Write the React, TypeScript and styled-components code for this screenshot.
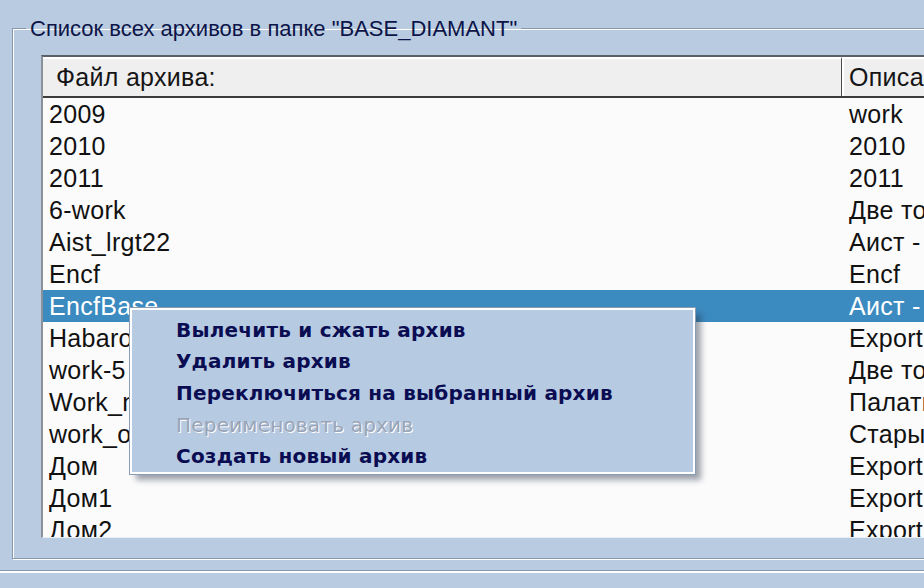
import React from "react";
import styled, { createGlobalStyle } from "styled-components";

const GlobalStyle = createGlobalStyle`
	html, body {
		margin: 0;
		padding: 0;
		overflow: hidden;
		background: #b8cbe0;
	}
`;

const Window = styled.div`
	width: 924px;
	height: 588px;
	overflow: hidden;
	background: #b8cbe0;
	font-family: "Liberation Sans", Arial, sans-serif;
	display: flex;
	flex-direction: column;
	padding-top: 15px;
	box-sizing: border-box;
`;

const Group = styled.fieldset`
	margin: 0 0 0 12px;
	width: 1000px;
	height: 544px;
	box-sizing: border-box;
	padding: 14px 0 16px 28px;
	border: 1px solid #8898ac;
	border-right: none;
	box-shadow: inset 1px 1px 0 #ffffff, 1px 1px 0 #ffffff;
	min-width: 0;
`;

const Caption = styled.legend`
	margin-left: -15px;
	padding: 2px 4px 0 4px;
	font-size: 22px;
	line-height: 24px;
	color: #0c1448;
`;

const ListBox = styled.div`
	position: relative;
	width: 980px;
	height: 483px;
	background: #fbfbfb;
	border-top: 2px solid #5a5e66;
	border-left: 2px solid #8c9098;
	border-bottom: 1px solid #e8eef6;
	box-sizing: border-box;
	overflow: hidden;
	font-size: 25px;
	letter-spacing: 0.3px;
	color: #111;
`;

const Header = styled.div`
	display: grid;
	grid-template-columns: 798px 1fr;
	height: 41px;
	background: #efefef;
	border-bottom: 2px solid #3c3c3c;
	box-sizing: border-box;
`;

const HeaderCell = styled.div<{ $divider?: boolean }>`
	display: flex;
	align-items: center;
	padding-left: ${(p) => (p.$divider ? "7px" : "13px")};
	border-top: 2px solid #ffffff;
	border-left: ${(p) => (p.$divider ? "1px solid #4a4a4a" : "none")};
	box-shadow: ${(p) => (p.$divider ? "inset 2px 0 0 #ffffff" : "none")};
	font-size: 25px;
	color: #151515;
	white-space: nowrap;
	overflow: hidden;
`;

const Row = styled.div<{ $selected?: boolean }>`
	display: grid;
	grid-template-columns: 800px 1fr;
	height: 32px;
	align-items: center;
	padding-left: 6px;
	background: ${(p) => (p.$selected ? "#3b8ac0" : "transparent")};
	color: ${(p) => (p.$selected ? "#ffffff" : "#111111")};
	white-space: nowrap;
`;

const Menu = styled.div`
	position: absolute;
	left: 87px;
	top: 251px;
	width: 565px;
	height: 166px;
	box-sizing: border-box;
	background: #b6cae2;
	border: 2px solid #ffffff;
	outline: 1px solid #8a9cb2;
	box-shadow: 6px 6px 6px rgba(40, 50, 70, 0.45);
	padding: 4px 0 0 44px;
	display: flex;
	flex-direction: column;
`;

const MenuItem = styled.div<{ $disabled?: boolean }>`
	height: 32px;
	display: flex;
	align-items: center;
	font-family: "DejaVu Sans", Verdana, sans-serif;
	font-size: 20px;
	letter-spacing: 0.2px;
	color: ${(p) => (p.$disabled ? "#9aa4b6" : "#0b0d52")};
	text-shadow: ${(p) => (p.$disabled ? "1px 1px 0 #ffffff" : "none")};
	font-weight: ${(p) => (p.$disabled ? "normal" : "bold")};
`;

const Separator = styled.div`
	margin-top: 11px;
	height: 1px;
	background: #8898ac;
	border-bottom: 2px solid #ffffff;
`;

const rows: [string, string][] = [
	["2009", "work"],
	["2010", "2010"],
	["2011", "2011"],
	["6-work", "Две точки"],
	["Aist_lrgt22", "Аист - ремонт"],
	["Encf", "Encf"],
	["EncfBase", "Аист - база"],
	["Habarovsk", "Export"],
	["work-5", "Две точки"],
	["Work_new", "Палаты"],
	["work_old", "Старые"],
	["Дом", "Export"],
	["Дом1", "Export"],
	["Дом2", "Export"],
];

const menuItems = [
	{ label: "Вылечить и сжать архив" },
	{ label: "Удалить архив" },
	{ label: "Переключиться на выбранный архив" },
	{ label: "Переименовать архив", disabled: true },
	{ label: "Создать новый архив" },
];

export default function App() {
	return (
		<React.Fragment>
			<GlobalStyle />
			<Window>
				<Group>
					<Caption>Список всех архивов в папке "BASE_DIAMANT"</Caption>
					<ListBox>
						<Header>
							<HeaderCell>Файл архива:</HeaderCell>
							<HeaderCell $divider>Описание</HeaderCell>
						</Header>
						{rows.map(([name, desc]) => (
							<Row key={name} $selected={name === "EncfBase"}>
								<span>{name}</span>
								<span>{desc}</span>
							</Row>
						))}
						<Menu>
							{menuItems.map((m) => (
								<MenuItem key={m.label} $disabled={m.disabled}>
									{m.label}
								</MenuItem>
							))}
						</Menu>
					</ListBox>
				</Group>
				<Separator />
			</Window>
		</React.Fragment>
	);
}
